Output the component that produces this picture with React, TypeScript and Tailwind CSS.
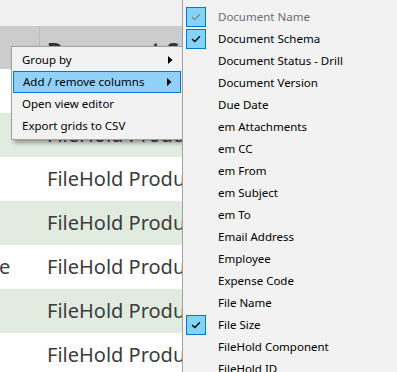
import React from "react";

const rows = [
  { first: "", green: false },
  { first: "", green: true },
  { first: "", green: false },
  { first: "", green: true },
  { first: "e", green: false },
  { first: "", green: true },
  { first: "", green: false },
];

const columns = [
  { label: "Document Name", checked: true, disabled: true },
  { label: "Document Schema", checked: true },
  { label: "Document Status - Drill" },
  { label: "Document Version" },
  { label: "Due Date" },
  { label: "em Attachments" },
  { label: "em CC" },
  { label: "em From" },
  { label: "em Subject" },
  { label: "em To" },
  { label: "Email Address" },
  { label: "Employee" },
  { label: "Expense Code" },
  { label: "File Name" },
  { label: "File Size", checked: true },
  { label: "FileHold Component" },
  { label: "FileHold ID" },
];

const Check: React.FC<{ gray?: boolean }> = ({ gray }) => (
  <svg width="10" height="8" viewBox="0 0 10 8">
    <path
      d="M1 4 L3.8 6.6 L9 1.2"
      fill="none"
      stroke={gray ? "#7a8a94" : "#000"}
      strokeWidth="1.4"
    />
  </svg>
);

const Arrow: React.FC = () => (
  <svg width="5" height="8" viewBox="0 0 5 8">
    <path d="M0 0 L4.5 4 L0 8 Z" fill="#000" />
  </svg>
);

const App: React.FC = () => {
  return (
    <div
      className="relative w-[397px] h-[372px] overflow-hidden bg-white"
      style={{ fontFamily: '"Noto Sans", sans-serif' }}
    >
      {/* Grid */}
      <div className="h-[26px] bg-[#f0f0f0]"></div>
      <div className="h-[43px] bg-[#cccccc] flex">
        <div className="w-[40px] border-r border-[#bdbdbd]"></div>
        <div className="pl-[7px] pt-[7px] text-[22px] font-bold text-[#333] whitespace-nowrap">
          Document Schema
        </div>
      </div>
      {rows.map((r, i) => (
        <div
          key={i}
          className={`h-[44px] flex items-center ${r.green ? "bg-[#e2ebe0]" : "bg-white"}`}
        >
          <div className="w-[47px] overflow-hidden flex justify-start text-[20px] text-[#3c3c3c]">
            {r.first && <span className="-ml-[1px]">{r.first}</span>}
          </div>
          <div className="text-[20px] text-[#3c3c3c] whitespace-nowrap">
            FileHold Products
          </div>
        </div>
      ))}

      {/* Context menu */}
      <div className="absolute left-[11px] top-[46px] w-[172px] bg-[#f2f2f2] border border-[#a0a0a0] shadow-[3px_3px_4px_rgba(0,0,0,0.35)] py-[2px] text-[11.5px] text-black">
        <div className="h-[22px] flex items-center pl-[10px] pr-[9px] justify-between">
          <span>Group by</span>
          <Arrow />
        </div>
        <div className="h-[22px] mx-[1px] flex items-center pl-[9px] pr-[8px] justify-between bg-[#91d1f8] border border-[#0078d7]">
          <span>Add / remove columns</span>
          <Arrow />
        </div>
        <div className="h-[22px] flex items-center pl-[10px]">Open view editor</div>
        <div className="h-[22px] flex items-center pl-[10px]">Export grids to CSV</div>
      </div>

      {/* Submenu */}
      <div className="absolute left-[182px] top-0 w-[215px] h-[372px] bg-[#f2f2f2] border-l border-[#a0a0a0] pt-[6px] text-[11.5px]">
        {columns.map((c) => (
          <div key={c.label} className="h-[22px] flex items-center">
            <div className="w-[35px] pl-[3px] flex items-center">
              {c.checked && (
                <div className="w-[20px] h-[20px] bg-[#84d4f7] border border-[#0078d7] flex items-center justify-center">
                  <Check gray={c.disabled} />
                </div>
              )}
            </div>
            <span className={c.disabled ? "text-[#6d6d6d]" : "text-black"}>{c.label}</span>
          </div>
        ))}
      </div>
    </div>
  );
};

export default App;
